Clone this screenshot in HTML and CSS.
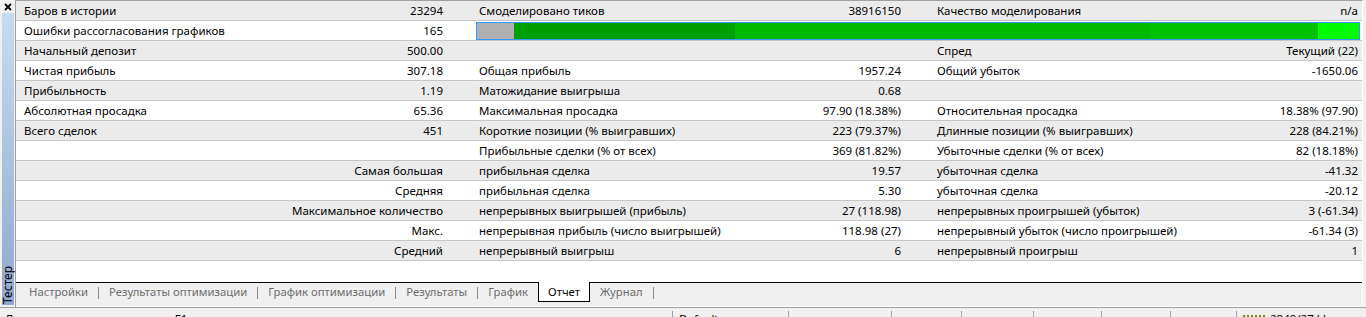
FILE: index.html
```html
<!DOCTYPE html>
<html lang="ru">
<head>
    <meta charset="UTF-8">
    <meta name="viewport" content="width=device-width, initial-scale=1.0">
    <title>Тестер - Отчет</title>
    <link rel="stylesheet" href="styles.css">
</head>
<body>
    <div class="window">
        <div class="main">
            <div class="sidebar">
                <span class="close">
                    <svg width="8" height="8" viewBox="0 0 8 8"><path d="M1 1L7 7M7 1L1 7" stroke="#000" stroke-width="1.8"/></svg>
                </span>
                <div class="caption"><span>Тестер</span></div>
            </div>

            <div class="panel">
                <div class="report">
                    <div class="row">
                        <div class="cell"><span>Баров в истории</span><span>23294</span></div>
                        <div class="cell"><span>Смоделировано тиков</span><span>38916150</span></div>
                        <div class="cell"><span>Качество моделирования</span><span>n/a</span></div>
                    </div>
                    <div class="row">
                        <div class="cell"><span>Ошибки рассогласования графиков</span><span>165</span></div>
                        <div class="quality">
                            <div class="seg seg-gray"></div>
                            <div class="seg seg-dark"></div>
                            <div class="seg seg-mid"></div>
                            <div class="seg seg-light"></div>
                            <div class="seg seg-bright"></div>
                        </div>
                    </div>
                    <div class="row">
                        <div class="cell"><span>Начальный депозит</span><span>500.00</span></div>
                        <div class="cell"></div>
                        <div class="cell"><span>Спред</span><span>Текущий (22)</span></div>
                    </div>
                    <div class="row">
                        <div class="cell"><span>Чистая прибыль</span><span>307.18</span></div>
                        <div class="cell"><span>Общая прибыль</span><span>1957.24</span></div>
                        <div class="cell"><span>Общий убыток</span><span>-1650.06</span></div>
                    </div>
                    <div class="row">
                        <div class="cell"><span>Прибыльность</span><span>1.19</span></div>
                        <div class="cell"><span>Матожидание выигрыша</span><span>0.68</span></div>
                        <div class="cell"></div>
                    </div>
                    <div class="row">
                        <div class="cell"><span>Абсолютная просадка</span><span>65.36</span></div>
                        <div class="cell"><span>Максимальная просадка</span><span>97.90 (18.38%)</span></div>
                        <div class="cell"><span>Относительная просадка</span><span>18.38% (97.90)</span></div>
                    </div>
                    <div class="row">
                        <div class="cell"><span>Всего сделок</span><span>451</span></div>
                        <div class="cell"><span>Короткие позиции (% выигравших)</span><span>223 (79.37%)</span></div>
                        <div class="cell"><span>Длинные позиции (% выигравших)</span><span>228 (84.21%)</span></div>
                    </div>
                    <div class="row">
                        <div class="cell"></div>
                        <div class="cell"><span>Прибыльные сделки (% от всех)</span><span>369 (81.82%)</span></div>
                        <div class="cell"><span>Убыточные сделки (% от всех)</span><span>82 (18.18%)</span></div>
                    </div>
                    <div class="row">
                        <div class="cell end"><span>Самая большая</span></div>
                        <div class="cell"><span>прибыльная сделка</span><span>19.57</span></div>
                        <div class="cell"><span>убыточная сделка</span><span>-41.32</span></div>
                    </div>
                    <div class="row">
                        <div class="cell end"><span>Средняя</span></div>
                        <div class="cell"><span>прибыльная сделка</span><span>5.30</span></div>
                        <div class="cell"><span>убыточная сделка</span><span>-20.12</span></div>
                    </div>
                    <div class="row">
                        <div class="cell end"><span>Максимальное количество</span></div>
                        <div class="cell"><span>непрерывных выигрышей (прибыль)</span><span>27 (118.98)</span></div>
                        <div class="cell"><span>непрерывных проигрышей (убыток)</span><span>3 (-61.34)</span></div>
                    </div>
                    <div class="row">
                        <div class="cell end"><span>Макс.</span></div>
                        <div class="cell"><span>непрерывная прибыль (число выигрышей)</span><span>118.98 (27)</span></div>
                        <div class="cell"><span>непрерывный убыток (число проигрышей)</span><span>-61.34 (3)</span></div>
                    </div>
                    <div class="row">
                        <div class="cell end"><span>Средний</span></div>
                        <div class="cell"><span>непрерывный выигрыш</span><span>6</span></div>
                        <div class="cell"><span>непрерывный проигрыш</span><span>1</span></div>
                    </div>
                    <div class="row blank"></div>
                </div>

                <div class="tabs">
                    <span class="tab">Настройки</span>
                    <span class="sep"></span>
                    <span class="tab">Результаты оптимизации</span>
                    <span class="sep"></span>
                    <span class="tab">График оптимизации</span>
                    <span class="sep"></span>
                    <span class="tab">Результаты</span>
                    <span class="sep"></span>
                    <span class="tab">График</span>
                    <span class="tab active">Отчет</span>
                    <span class="tab">Журнал</span>
                    <span class="sep"></span>
                </div>
            </div>
        </div>

        <div class="statusbar">
            <span class="field help">Для вызова справки нажмите F1</span>
            <span class="field w116">Default</span>
            <span class="field w103"></span>
            <span class="field w70"></span>
            <span class="field w72"></span>
            <span class="field w68"></span>
            <span class="field w69"></span>
            <span class="field w66"></span>
            <span class="field conn"><span class="bars"></span>2849/27 kb</span>
        </div>
    </div>
</body>
</html>
```

FILE: styles.css
```css
* {
    box-sizing: border-box;
}
body {
    margin: 0;
    width: 1366px;
    height: 317px;
    overflow: hidden;
    background-color: #f0f0f0;
    font-family: "Noto Sans", "Open Sans", sans-serif;
    font-size: 11.5px;
    color: #000;
}
.window {
    display: flex;
    flex-direction: column;
    height: 317px;
}
.main {
    display: flex;
    height: 307px;
    flex: none;
}

/* left docked caption */
.sidebar {
    width: 16px;
    border-right: 1px solid #a0a0a0;
    display: flex;
    flex-direction: column;
    padding: 3px 1px 2px 2px;
}
.close {
    height: 10px;
    padding-left: 2px;
    line-height: 0;
}
.caption {
    flex: 1;
    background: linear-gradient(#c9dbef, #8fa8ce);
    display: flex;
    align-items: flex-end;
    justify-content: center;
}
.caption span {
    writing-mode: vertical-rl;
    transform: rotate(180deg);
    font-size: 12px;
    line-height: 12px;
    padding-top: 1px;
}

/* report table */
.panel {
    flex: 1;
    display: flex;
    flex-direction: column;
    border-top: 1px solid #a0a0a0;
    border-right: 1px solid #fff;
    border-bottom: 1px solid #fff;
    margin-right: 3px;
}
.row {
    display: grid;
    grid-template-columns: 419px 422px 1fr;
    column-gap: 36px;
    height: 20px;
    padding: 0 4px 0 8px;
    line-height: 19px;
    border-bottom: 1px solid #c6c6c6;
    background-color: #ebebeb;
    white-space: nowrap;
}
.row:nth-child(even) {
    background-color: #fff;
}
.row.blank {
    height: 21px;
    border-bottom: none;
}
.cell {
    display: flex;
    justify-content: space-between;
}
.cell.end {
    justify-content: flex-end;
}
.quality {
    grid-column: 2 / 4;
    display: flex;
    height: 18px;
    margin: 1px -2px 0 -3px;
    border: 1px solid #3399ff;
}
.seg {
    height: 100%;
}
.seg-gray { width: 37px; background-color: #b0b0b0; }
.seg-dark { width: 221px; background-color: #009f00; }
.seg-mid { width: 415px; background-color: #00b900; }
.seg-light { width: 168px; background-color: #00c300; }
.seg-bright { flex: 1; background-color: #00fa00; }

/* tabs */
.tabs {
    flex: 1;
    display: flex;
    align-items: flex-start;
    padding-left: 3px;
    border-top: 1px solid #000;
    font-size: 11.3px;
}
.tab {
    height: 19px;
    padding: 0 10px;
    line-height: 18px;
    color: #6d6d6d;
    white-space: nowrap;
}
.tab.active {
    margin-top: -1px;
    height: 20px;
    padding: 1px 9px 0;
    background-color: #fff;
    border: 1px solid #000;
    border-top: none;
    color: #000;
}
.sep {
    width: 1px;
    height: 12px;
    margin-top: 4px;
    background-color: #8a8a8a;
}

/* status bar */
.statusbar {
    flex: 1;
    display: flex;
    border-top: 1px solid #a0a0a0;
    padding-top: 1px;
    line-height: 16px;
    white-space: nowrap;
}
.field {
    padding-left: 6px;
    border-left: 1px solid #a0a0a0;
    margin-top: 3px;
    line-height: 16px;
    position: relative;
    top: -1px;
}
.field.help {
    width: 672px;
    padding-left: 5px;
    border-left: none;
}
.w116 { width: 116px; }
.w103 { width: 103px; }
.w70 { width: 70px; }
.w72 { width: 72px; }
.w68 { width: 68px; }
.w69 { width: 69px; }
.w66 { width: 66px; }
.conn {
    flex: 1;
    display: flex;
    align-items: flex-start;
}
.bars {
    width: 22px;
    height: 10px;
    margin: 4px 5px 0 0;
    background: repeating-linear-gradient(90deg, #6b8e00 0 2px, transparent 2px 4px);
}
```
